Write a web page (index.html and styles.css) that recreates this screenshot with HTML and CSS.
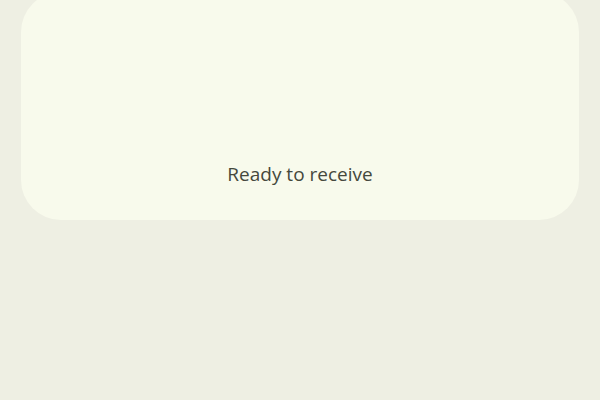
FILE: index.html
```html
<!DOCTYPE html>
<html>
<head>
<meta charset="utf-8">
<link rel="stylesheet" href="styles.css">
</head>
<body>
<div class="screen">
  <div class="card">
    <div class="status">Ready to receive</div>
  </div>
</div>
</body>
</html>
```
FILE: styles.css
```css
html, body {
  margin: 0;
  padding: 0;
  width: 600px;
  height: 400px;
  overflow: hidden;
  background: #eeefe3;
}
.screen {
  padding: 0 21px;
}
.card {
  margin-top: -8px;
  height: 228px;
  background: #f8faec;
  border-radius: 40px;
  display: flex;
  flex-direction: column;
  justify-content: flex-end;
  align-items: center;
  padding-bottom: 33px;
  box-sizing: border-box;
}
.status {
  font-family: "Open Sans", sans-serif;
  font-size: 19px;
  font-weight: 500;
  color: #45483c;
  line-height: 26px;
}
```
